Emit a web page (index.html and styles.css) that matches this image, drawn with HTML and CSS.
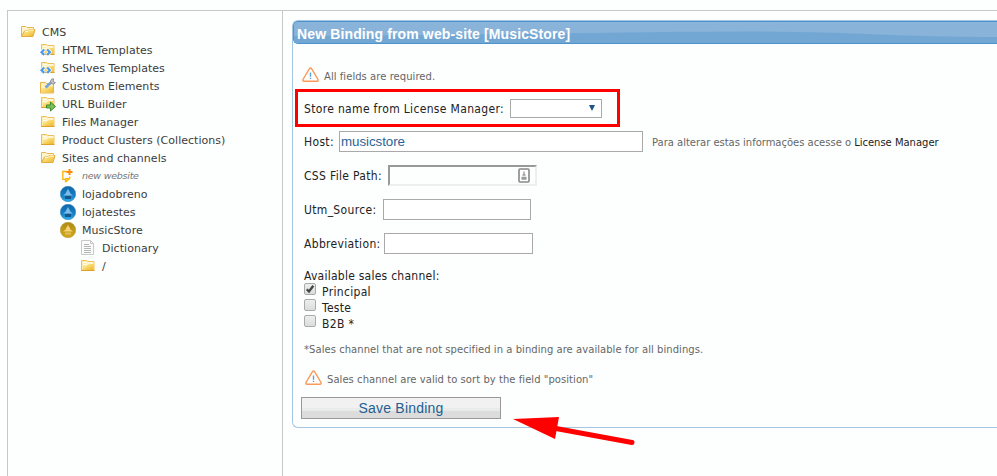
FILE: index.html
```html
<!DOCTYPE html>
<html lang="en">
<head>
<meta charset="utf-8">
<title>New Binding</title>
<link rel="stylesheet" href="styles.css">
</head>
<body>
<svg width="0" height="0" class="defs">
  <defs>
    <linearGradient id="gold" x1="0" y1="0" x2="1" y2="1"><stop offset="0" stop-color="#fff3bd"/><stop offset=".5" stop-color="#f9d665"/><stop offset="1" stop-color="#e9b42c"/></linearGradient>
    <linearGradient id="blue" x1="0" y1="0" x2="0" y2="1"><stop offset="0" stop-color="#0d66a8"/><stop offset=".65" stop-color="#1583c8"/><stop offset="1" stop-color="#2bb5ee"/></linearGradient>
    <linearGradient id="ochre" x1="0" y1="0" x2="0" y2="1"><stop offset="0" stop-color="#ae8a16"/><stop offset="1" stop-color="#d0aa1c"/></linearGradient>
    <symbol id="folder" viewBox="0 0 16 16">
      <path d="M1.500 12.500v-10h5l1 1h6.500v9z" fill="#fdeeb8" stroke="#f0c058"/>
      <path d="M2.500 12v-4.500h4l2-1.500h5v6z" fill="url(#gold)"/>
      <path d="M3 4.500h4M3 6.500h3.500l2-1.500h5" stroke="#fffdf0" fill="none"/>
      <path d="M1 12.500h13.500" stroke="#dfa12c"/>
    </symbol>
    <symbol id="open" viewBox="0 0 16 16">
      <path d="M1.500 12V2.500h4.500l1 1h6.500V5" fill="#fff4cc" stroke="#e8b552"/>
      <path d="M1.500 12.500L4.500 7h3l1.500-1.500h6L13 12.500z" fill="url(#gold)" stroke="#e3ad3f"/>
      <path d="M5 7.500h3l1.500-1.500H14" stroke="#fffbe0" fill="none"/>
    </symbol>
    <symbol id="code" viewBox="0 0 16 16">
      <use href="#folder"/>
      <path d="M4.200 7.500L1.500 10.200l2.700 2.700M7.200 7.500l2.700 2.700-2.700 2.700" fill="none" stroke="#fff" stroke-width="3.600"/>
      <path d="M4.200 7.500L1.500 10.200l2.700 2.700M7.200 7.500l2.700 2.700-2.700 2.700" fill="none" stroke="#4c9ae8" stroke-width="2.200"/>
    </symbol>
    <symbol id="tool" viewBox="0 0 16 16">
      <path d="M.5 15V4.500h5l1 1h7V15z" fill="#fff0ba" stroke="#e8b24a"/>
      <path d="M1 14.500V10h5l1.500-1.500H13v6z" fill="url(#gold)"/>
      <path d="M5.500 9.500l5-4.500" stroke="#6fa5da" stroke-width="2.600"/>
      <path d="M10 5.500l2.500-2.200" stroke="#8f9aa5" stroke-width="2.500"/>
      <path d="M13.500.8a2.600 2.600 0 1 0 2 3.800l-2.300-.8z" fill="#c9cdd2" stroke="#8b9097"/>
    </symbol>
    <symbol id="go" viewBox="0 0 16 16">
      <use href="#folder" y="-1"/>
      <path d="M6.500 9h4V6l5 4.500-5 4.500v-3h-4z" fill="#79c05a" stroke="#3f8b2c"/>
    </symbol>
    <symbol id="new" viewBox="0 0 16 16">
      <path d="M7 3.500H2.800v7.800h2.700v2.200h.7l3.600-3.200V8.500M5.800 13.500v-2.800H10" fill="none" stroke="#fbb400" stroke-width="1.300"/>
      <path d="M9.500 1v6M6.500 4h6" stroke="#ff8a00" stroke-width="2"/>
    </symbol>
    <symbol id="flame" viewBox="0 0 16 16">
      <path d="M8 2.300C8.200 4.500 9.700 5.300 10.300 7.500L13 9.500H3L5.700 7.500C6.300 5.300 7.800 4.500 8 2.300z"/>
    </symbol>
    <symbol id="site" viewBox="0 0 16 16">
      <circle cx="8" cy="8" r="7.700" fill="url(#blue)" stroke="#4187ba" stroke-width=".6"/>
      <use href="#flame" fill="#7dbbe8"/><path d="M5 10h6v3H5z" fill="#17568a"/>
    </symbol>
    <symbol id="gsite" viewBox="0 0 16 16">
      <circle cx="8" cy="8" r="7.700" fill="url(#ochre)" stroke="#b99a33" stroke-width=".6"/>
      <use href="#flame" fill="#f8d274"/><path d="M5 10.500h6v2H5z" fill="#e8bd58"/>
    </symbol>
    <symbol id="doc" viewBox="0 0 16 16">
      <path d="M1.500.5h9l3 3v11h-12z" fill="#fbfbfb" stroke="#c9c9c9"/>
      <path d="M10.500.5v3h3" fill="none" stroke="#c9c9c9"/>
      <path d="M4 4.500h5M4 6.500h7M4 8.500h7M4 10.500h7M4 12.500h7" stroke="#b5b5b5"/>
    </symbol>
    <symbol id="warn" viewBox="0 0 17 15">
      <path d="M8.500 1Q9.200 1 9.700 1.900L16 12.500Q16.500 14.200 15 14.200H2Q.5 14.200 1 12.500L7.300 1.900Q7.800 1 8.500 1z" fill="#fff" stroke="#f99a58" stroke-width="1.400"/>
      <path d="M8.500 5.500v4.300M8.500 10.800v1.300" stroke="#5ba0d8" stroke-width="1.400"/>
    </symbol>
  </defs>
</svg>
<div class="frame">
  <nav class="tree">
    <div class="node"><svg><use href="#open"/></svg><span>CMS</span></div>
    <div class="node l1"><svg><use href="#code"/></svg><span>HTML Templates</span></div>
    <div class="node l1"><svg><use href="#code"/></svg><span>Shelves Templates</span></div>
    <div class="node l1"><svg><use href="#tool"/></svg><span>Custom Elements</span></div>
    <div class="node l1"><svg><use href="#go"/></svg><span>URL Builder</span></div>
    <div class="node l1"><svg><use href="#folder"/></svg><span>Files Manager</span></div>
    <div class="node l1"><svg><use href="#folder"/></svg><span>Product Clusters (Collections)</span></div>
    <div class="node l1"><svg><use href="#open"/></svg><span>Sites and channels</span></div>
    <div class="node l2"><svg><use href="#new"/></svg><span class="new">new website</span></div>
    <div class="node l2"><svg><use href="#site"/></svg><span>lojadobreno</span></div>
    <div class="node l2"><svg><use href="#site"/></svg><span>lojatestes</span></div>
    <div class="node l2"><svg><use href="#gsite"/></svg><span>MusicStore</span></div>
    <div class="node l3"><svg><use href="#doc"/></svg><span>Dictionary</span></div>
    <div class="node l3"><svg><use href="#folder"/></svg><span>/</span></div>
  </nav>
  <main class="content">
    <section class="panel">
      <header class="title">
        <svg class="wave" viewBox="0 0 704 21" preserveAspectRatio="none"><path d="M0 14C170 14 290 10 450 9.500C560 9.500 600 15 704 15V21H0z" fill="#72a7d3"/></svg>
        <h1>New Binding from web-site [MusicStore]</h1>
      </header>
      <form class="form">
        <p class="hint"><svg><use href="#warn"/></svg><span>All fields are required.</span></p>
        <div class="row store"><label class="lb-store">Store name from License Manager:</label><span class="select"><i></i></span><span class="mark"></span></div>
        <div class="row host"><label class="lb-host">Host:</label><input type="text" value="musicstore"><span class="note">Para alterar estas informações acesse o <a>License Manager</a></span></div>
        <div class="row css"><label class="lb-css">CSS File Path:</label><span class="path"><svg viewBox="0 0 12 15"><rect x="1" y="1" width="10" height="13" rx="1" fill="#fff" stroke="#888" stroke-width="1.600"/><path d="M6 3.500v4M4.500 7h3M3.500 9.500h5M3.500 11h5" stroke="#999" stroke-width="1.300"/></svg></span></div>
        <div class="row utm"><label class="lb-utm">Utm_Source:</label><input type="text"></div>
        <div class="row abbr"><label class="lb-abbr">Abbreviation:</label><input type="text"></div>
        <div class="row channels"><span>Available sales channel:</span></div>
        <div class="row check"><span class="box"><svg viewBox="0 0 12 12"><path d="M2.800 6.200L5 8.500 9.300 2.800" fill="none" stroke="#444" stroke-width="2.300"/></svg></span><label>Principal</label></div>
        <div class="row check"><span class="box"></span><label>Teste</label></div>
        <div class="row check"><span class="box"></span><label>B2B *</label></div>
        <p class="foot"><span>*Sales channel that are not specified in a binding are available for all bindings.</span></p>
        <p class="hint sort"><svg><use href="#warn"/></svg><span>Sales channel are valid to sort by the field "position"</span></p>
        <button type="button">Save Binding</button>
      </form>
      <svg class="arrow" viewBox="0 0 124 32"><path d="M0 3L46 1 42 23z" fill="#f00"/><path d="M43 12.500L119 26.500" stroke="#f00" stroke-width="5" stroke-linecap="round"/></svg>
    </section>
  </main>
</div>
</body>
</html>
```
FILE: styles.css
```css
* { box-sizing: border-box; }
body { margin: 0; height: 476px; overflow: hidden; background: #fdfffe; font-family: "DejaVu Sans", sans-serif; padding: 10px 0 0 7px; }
.defs { position: absolute; }
svg { display: block; flex: none; }
.frame { display: flex; height: 466px; border: solid #c8c8c8; border-width: 1px 0 0 1px; }
.tree { width: 275px; flex: none; border-right: 1px solid #c8c8c8; padding: 12px 0 0 12px; font-size: 11px; color: #3c3c3c; }
.node { display: flex; align-items: center; height: 18px; gap: 6px; white-space: nowrap; }
.node svg { width: 16px; height: 16px; }
.node span { line-height: 18px; padding-top: 1px; letter-spacing: .04px; }
.l1 { padding-left: 20px; }
.l2 { padding-left: 40px; }
.l3 { padding-left: 60px; }
.node .new { font-style: italic; font-size: 9.500px; color: #777; letter-spacing: -.25px; padding-top: 0; }
.content { flex: 1; min-width: 0; padding: 9px 0 0 9px; }
.panel { position: relative; height: 408px; border: 1px solid #a3c6e2; border-right: 0; border-radius: 6px 0 0 6px; }
.title { position: relative; height: 23px; border: solid #4d94cf; border-width: 1px 0 1px 1px; border-radius: 5px 0 0 5px; background: #89b3d9; overflow: hidden; }
.wave { position: absolute; left: 0; top: 0; width: 100%; height: 100%; }
.title h1 { position: relative; margin: 0; padding: 2px 0 0 3px; font: bold 14px/21px "Liberation Sans", sans-serif; color: #fff; white-space: nowrap; letter-spacing: .13px; }
.form { padding: 21px 0 0 11px; font-size: 12px; color: #222; font-family: "DejaVu Sans Condensed", "DejaVu Sans", sans-serif; letter-spacing: .33px; }
.form p { margin: 0; display: flex; align-items: center; white-space: nowrap; font: 10px/16px "DejaVu Sans", sans-serif; color: #666; letter-spacing: .05px; }
.form p.hint { height: 22px; gap: 5px; margin-left: -2px; }
.form p span { padding-top: 1px; }
.hint svg { width: 17px; height: 15px; margin-top: -3px; }
.row { display: flex; align-items: center; height: 33px; white-space: nowrap; }
.row > label { flex: none; }
.row.store { margin-top: 5px; position: relative; }
.mark { position: absolute; left: -9px; top: -3px; width: 325px; height: 38px; border: 3px solid #f00; }
.lb-store { width: 206px; }
.lb-host { width: 35px; }
.lb-css { width: 84px; }
.lb-utm { width: 79px; }
.lb-abbr { width: 80px; }
.select { width: 92px; height: 19px; border: 1px solid #a9a9a9; background: #fff; display: flex; justify-content: flex-end; align-items: center; padding-right: 6px; }
.select i { border: solid transparent; border-width: 6px 3px 0; border-top-color: #1c5587; margin-top: -2px; }
.row input { width: 149px; height: 21px; margin: 0; padding: 0 1px; border: 1px solid #a9a9a9; background: #fff; font: 13.333px "Liberation Sans", sans-serif; color: #2a6496; }
.utm input { width: 148px; }
.host input { width: 304px; letter-spacing: -.05px; }
.note { margin-left: 9px; font: 10px "DejaVu Sans", sans-serif; color: #666; letter-spacing: -.02px; padding-top: 1px; }
.note a { color: #222; }
.css, .abbr { height: 35px; }
.path { width: 149px; height: 21px; border: 2px solid; border-color: #999 #eee #eee #999; display: flex; align-items: center; justify-content: flex-end; padding-right: 5px; }
.path svg { width: 12px; height: 15px; }
.row.channels { height: 16px; margin-top: 6px; letter-spacing: .25px; }
.row.check { height: 16px; gap: 6px; }
.check label { line-height: 16px; padding-top: 1px; }
.channels span { padding-top: 1px; }
.box { width: 12px; height: 12px; margin-top: -4px; border: 1px solid #aaa; border-radius: 2px; background: linear-gradient(#ededed, #dcdcdc); }
.box svg { width: 12px; height: 12px; margin: -1px; }
.form p.foot { height: 16px; margin-top: 10px; }
.form p.sort { height: 20px; margin: 12px 0 0 1px; }
.form button { display: block; width: 200px; height: 22px; margin: 8px 0 0 -3px; padding: 0; border: 1px solid #999; background: linear-gradient(#f1f1f1 0 50%, #e9eaea 50% 65%, #dcdcdc 65%); font: 14px/20px "Liberation Sans", sans-serif; color: #245f91; letter-spacing: .2px; }
.arrow { position: absolute; left: 220px; top: 395px; width: 124px; height: 32px; }
```
